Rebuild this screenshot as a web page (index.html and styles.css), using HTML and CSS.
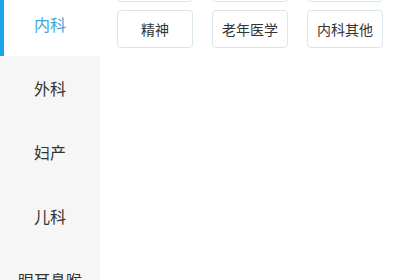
FILE: index.html
```html
<!DOCTYPE html>
<html lang="zh-CN">
<head>
  <meta charset="UTF-8" />
  <title>科室选择</title>
  <meta name="viewport" content="width=device-width, initial-scale=1.0"/>
  <link rel="stylesheet" href="styles.css">
</head>
<body>
  <div class="page">
    <!-- 左侧科室列表 -->
    <ul class="dept-list">
      <li class="dept-item active">内科</li>
      <li class="dept-item">外科</li>
      <li class="dept-item">妇产</li>
      <li class="dept-item">儿科</li>
      <li class="dept-item">眼耳鼻喉</li>
    </ul>

    <!-- 右侧子科室 -->
    <div class="sub-panel">
      <div class="sub-grid">
        <span class="sub-tag">心血管</span>
        <span class="sub-tag">消化</span>
        <span class="sub-tag">呼吸</span>
        <span class="sub-tag">精神</span>
        <span class="sub-tag">老年医学</span>
        <span class="sub-tag">内科其他</span>
      </div>
    </div>
  </div>
</body>
</html>
```

FILE: styles.css
```css
/* ========== 通用 ========== */
body{margin:0;padding:0;background:#fff;overflow:hidden;
     font-family:"Noto Sans CJK SC","Noto Sans",sans-serif;color:#333;}

.page{display:flex;align-items:flex-start;height:280px;}

/* ========== 左侧科室 ========== */
.dept-list{list-style:none;margin:-8px 0 0 0;padding:0;width:100px;flex:0 0 100px;background:#f6f6f6;}
.dept-item{height:64px;display:flex;align-items:center;justify-content:center;
           font-size:16px;color:#333;box-sizing:border-box;}
.dept-item.active{background:#fff;color:#45a7d6;border-left:4px solid #1aa3e8;padding-right:4px;}

/* ========== 右侧子科室 ========== */
.sub-panel{flex:1;padding:0 17px;}
.sub-grid{display:grid;grid-template-columns:repeat(3,76px);column-gap:19px;row-gap:8px;margin-top:-36px;}
.sub-tag{height:38px;display:flex;align-items:center;justify-content:center;box-sizing:border-box;
         border:1px solid #d9e6ec;border-radius:4px;background:#fff;font-size:14px;color:#333;}
```
